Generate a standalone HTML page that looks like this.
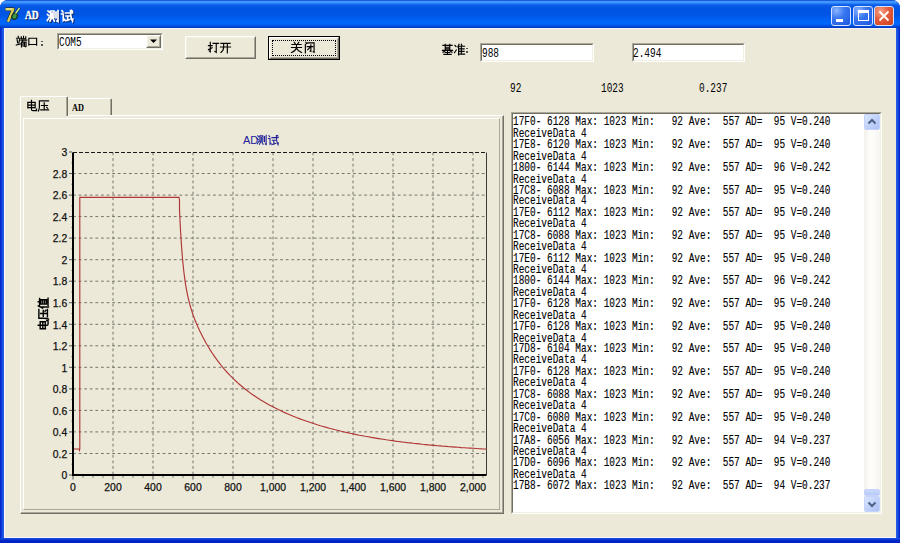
<!DOCTYPE html><html><head><meta charset="utf-8"><style>
*{margin:0;padding:0;box-sizing:border-box}
html,body{width:900px;height:543px;overflow:hidden;background:#fff}
body{position:relative;font-family:"Liberation Sans",sans-serif}
div,span,svg{position:absolute}
.g{overflow:visible}
.mono{font-family:"Liberation Mono",monospace}
.memo{-webkit-text-stroke:0.12px #000}
</style></head><body><div style="left:0;top:0;width:900px;height:543px;background:#0831D9;border-radius:8px 8px 0 0"></div><div style="left:0;top:28px;width:4px;height:515px;background:linear-gradient(to right,#001CC8,#1650E0 60%,#2A5FE8)"></div><div style="left:896px;top:28px;width:4px;height:515px;background:linear-gradient(to left,#001CC8,#1650E0 60%,#2A5FE8)"></div><div style="left:0;top:538px;width:900px;height:5px;background:linear-gradient(to bottom,#1A50E0,#0028C8 50%,#001CC0)"></div><div style="left:0;top:0;width:900px;height:28px;border-radius:8px 8px 0 0;background:linear-gradient(to bottom,#0A3FC8 0px,#3D95FF 1.5px,#3D95FF 2.5px,#0A5CE8 5px,#0054E3 9px,#0055E5 15px,#0062F6 20px,#0066FA 24px,#0050E0 26px,#0035C0 28px)"></div><div style="left:4px;top:28px;width:892px;height:510px;background:#ECE9D8;border-left:1px solid #F8F8F8;border-top:1px solid #F4F4F4;border-bottom:1px solid #F8F8F8"></div><svg style="left:0;top:0;width:24px;height:28px" viewBox="0 0 24 28"><path d="M5.5,9.2 L13.2,9.2 L8,21.8" fill="none" stroke="#2A2A10" stroke-width="3.8" stroke-linejoin="round" opacity="0.85"/><path d="M5.5,9.2 L13.2,9.2 L8,21.8" fill="none" stroke="#D8CC58" stroke-width="2.4" stroke-linejoin="round"/><path d="M6,9 L12,9" stroke="#F4F0B0" stroke-width="0.9"/><ellipse cx="14.6" cy="16.2" rx="2.6" ry="3.2" transform="rotate(30 14.6 16.2)" fill="#3C9A44" stroke="#14301A" stroke-width="1.2"/><path d="M15.5,13.5 L19.5,8" stroke="#102810" stroke-width="2.6"/><path d="M15.5,13.5 L19.5,8" stroke="#CDEFA0" stroke-width="1.4"/></svg><div style="left:25.5px;top:10px;font:bold 11.5px 'Liberation Serif',serif;line-height:12px;color:#0A246A;-webkit-text-stroke:0.4px #0A246A;transform:scaleX(0.82);transform-origin:0 0">AD</div><div style="left:24.5px;top:9px;font:bold 11.5px 'Liberation Serif',serif;line-height:12px;color:#fff;-webkit-text-stroke:0.4px #fff;transform:scaleX(0.82);transform-origin:0 0">AD</div><svg class="g" style="left:48.0px;top:11px;width:12px;height:12px;" viewBox="0 0 12 12"><path d="M1,1l1,1M0.5,4.5l1,1M0.3,10.5l2,-3M3.5,1v6.5M3.5,1h3.5v6.5M5.2,3v3.5M4.5,8l-1.5,3M5.8,8l1.5,3M9,2v6M11,0.5v11l-1,-0.6" fill="none" stroke="#0A246A" stroke-width="1.700" stroke-linecap="square"/></svg><svg class="g" style="left:47.0px;top:10px;width:12px;height:12px;" viewBox="0 0 12 12"><path d="M1,1l1,1M0.5,4.5l1,1M0.3,10.5l2,-3M3.5,1v6.5M3.5,1h3.5v6.5M5.2,3v3.5M4.5,8l-1.5,3M5.8,8l1.5,3M9,2v6M11,0.5v11l-1,-0.6" fill="none" stroke="#fff" stroke-width="1.700" stroke-linecap="square"/></svg><svg class="g" style="left:61.5px;top:11px;width:12px;height:12px;" viewBox="0 0 12 12"><path d="M1,0.8l1,1.2M0.5,4h1.8v6.5l1.2,-1M4.5,3h7M9.5,0.5q0,7 2,10.5l0.3,-2M10.6,0.5l0.8,0.8M5,6h3.5M6.7,6v4.5M4.5,10.8l4.3,-1.3" fill="none" stroke="#0A246A" stroke-width="1.700" stroke-linecap="square"/></svg><svg class="g" style="left:60.5px;top:10px;width:12px;height:12px;" viewBox="0 0 12 12"><path d="M1,0.8l1,1.2M0.5,4h1.8v6.5l1.2,-1M4.5,3h7M9.5,0.5q0,7 2,10.5l0.3,-2M10.6,0.5l0.8,0.8M5,6h3.5M6.7,6v4.5M4.5,10.8l4.3,-1.3" fill="none" stroke="#fff" stroke-width="1.700" stroke-linecap="square"/></svg><div style="left:831px;top:6px;width:20px;height:20px;border:1px solid #D8E4FC;border-radius:3px;background:radial-gradient(circle at 25% 20%,#8CB4FF 0%,#3A78F0 40%,#1C55E0 100%)"></div><div style="left:853px;top:6px;width:20px;height:20px;border:1px solid #D8E4FC;border-radius:3px;background:radial-gradient(circle at 25% 20%,#8CB4FF 0%,#3A78F0 40%,#1C55E0 100%)"></div><div style="left:874px;top:6px;width:20px;height:20px;border:1px solid #D8E4FC;border-radius:3px;background:radial-gradient(circle at 30% 25%,#F5A58A 0%,#E35B3A 45%,#C8401E 100%)"></div><div style="left:836px;top:18.5px;width:7px;height:3px;background:#fff"></div><div style="left:857.5px;top:10px;width:11px;height:11px;border:1px solid #fff;border-top-width:3px"></div><svg style="left:874px;top:6px;width:20px;height:20px" viewBox="0 0 20 20"><path d="M5.5,5.5L14.5,14.5M14.5,5.5L5.5,14.5" stroke="#fff" stroke-width="1.8"/></svg><svg class="g" style="left:16px;top:35.5px;width:11px;height:11px;" viewBox="0 0 12 12"><path d="M2.5,0.3v1.7M0.5,2.5h4M1.2,4l0.6,3.5M3.8,4l-0.6,3.5M0.3,10l4.5,-1.2M8.2,0.3v2.7M5.8,1v2h4.8v-2M5.2,4.5h6.5M7.5,4.5l-0.6,1.8M6,6.5v5.3M6,6.5h5v4.8l-0.7,0.5M7.7,6.5v4.5M9.3,6.5v4.5" fill="none" stroke="#000" stroke-width="1.255" stroke-linecap="square"/></svg><svg class="g" style="left:27px;top:35.5px;width:11px;height:11px;" viewBox="0 0 12 12"><path d="M2,2.5v7.5M2,2.5h8.5v7.5M2,9.3h8.5" fill="none" stroke="#000" stroke-width="1.255" stroke-linecap="square"/></svg><div style="left:41px;top:40.5px;width:1.6px;height:1.6px;background:#555"></div><div style="left:41px;top:44px;width:1.6px;height:1.6px;background:#555"></div><div style="left:57px;top:33px;width:106px;height:17px;background:#fff;border-top:1px solid #ACA899;border-left:1px solid #ACA899;border-right:1px solid #fff;border-bottom:1px solid #fff"><div style="left:0;top:0;right:0;bottom:0;border-top:1px solid #716F64;border-left:1px solid #716F64;border-right:1px solid #F1EFE2;border-bottom:1px solid #F1EFE2"></div></div><div style="left:146px;top:35px;width:15px;height:13px;background:#ECE9D8;border-top:1px solid #FFFFFF;border-left:1px solid #FFFFFF;border-right:1px solid #716F64;border-bottom:1px solid #716F64"><div style="left:0;top:0;right:0;bottom:0;border-top:1px solid #F1EFE2;border-left:1px solid #F1EFE2;border-right:1px solid #ACA899;border-bottom:1px solid #ACA899"></div></div><svg style="left:149px;top:38px;width:9px;height:6px" viewBox="0 0 9 6"><path d="M1,1.5h7l-3.5,3.5z" fill="#000"/></svg><div class="mono" style="left:59px;top:38px;font-size:12.5px;line-height:11px;color:#000;transform:scaleX(0.7556);transform-origin:0 0">COM5</div><div style="left:185px;top:36px;width:71px;height:23px;background:#ECE9D8;border-top:1px solid #FFFFFF;border-left:1px solid #FFFFFF;border-right:1px solid #716F64;border-bottom:1px solid #716F64"><div style="left:0;top:0;right:0;bottom:0;border-top:1px solid #F1EFE2;border-left:1px solid #F1EFE2;border-right:1px solid #ACA899;border-bottom:1px solid #ACA899"></div></div><svg class="g" style="left:208px;top:42px;width:11px;height:11px;" viewBox="0 0 12 12"><path d="M0.5,4h4M2.5,0.3v10.5l-1,-0.8M0.5,8.3l4,-2M5.5,1.5h6M9,1.5v9.8l-1.5,-1" fill="none" stroke="#000" stroke-width="1.255" stroke-linecap="square"/></svg><svg class="g" style="left:220px;top:42px;width:11px;height:11px;" viewBox="0 0 12 12"><path d="M1,1.5h10M0.5,5.5h11M4,1.5v4q0,4 -3,6M8,1.5v10.3" fill="none" stroke="#000" stroke-width="1.255" stroke-linecap="square"/></svg><div style="left:268px;top:36px;width:72px;height:24px;border:1px solid #000"></div><div style="left:269px;top:37px;width:70px;height:22px;background:#ECE9D8;border-top:1px solid #FFFFFF;border-left:1px solid #FFFFFF;border-right:1px solid #716F64;border-bottom:1px solid #716F64"><div style="left:0;top:0;right:0;bottom:0;border-top:1px solid #F1EFE2;border-left:1px solid #F1EFE2;border-right:1px solid #ACA899;border-bottom:1px solid #ACA899"></div></div><div style="left:272px;top:40px;width:64px;height:16px;border:1px dotted #000"></div><svg class="g" style="left:291px;top:42px;width:11px;height:11px;" viewBox="0 0 12 12"><path d="M3.5,0.3l1,1.5M8.5,0.3l-1,1.5M1,2.7h10M0.5,6h11M6,2.7v3.3q-1,4 -5.5,5.5M6,6.5q1.5,3.5 5.5,5" fill="none" stroke="#000" stroke-width="1.255" stroke-linecap="square"/></svg><svg class="g" style="left:304px;top:42px;width:11px;height:11px;" viewBox="0 0 12 12"><path d="M2,0.3l1,1.5M1.5,2.5v9.3M4,1h7v10.3l-1,-0.6M3.5,5h6M7.5,3v7.3l-0.8,-0.5M7,5.5l-3,3" fill="none" stroke="#000" stroke-width="1.255" stroke-linecap="square"/></svg><svg class="g" style="left:442px;top:43.5px;width:11px;height:11px;" viewBox="0 0 12 12"><path d="M1,1.5h10M3.5,0.3v7M8.5,0.3v7M3.5,3.5h5M3.5,5.3h5M0.5,7h11M4,7l-3,2M8,7l3,2M6,8v3M3.5,9.3h5M2,11.3h8" fill="none" stroke="#000" stroke-width="1.255" stroke-linecap="square"/></svg><svg class="g" style="left:454px;top:43.5px;width:11px;height:11px;" viewBox="0 0 12 12"><path d="M1,1.5l1.2,1.2M0.5,9.5l2,-3M5.5,0.3l-1.3,3M5,2.3v9.5M8,0.3l0.8,1.5M5,2.5h6.5M8,2.5v8.5M5,5.3h6M5,8h6M5,11h6.5" fill="none" stroke="#000" stroke-width="1.255" stroke-linecap="square"/></svg><div style="left:466px;top:47.5px;width:1.6px;height:1.6px;background:#555"></div><div style="left:466px;top:51px;width:1.6px;height:1.6px;background:#555"></div><div style="left:480px;top:43px;width:114px;height:19px;background:#fff;border-top:1px solid #ACA899;border-left:1px solid #ACA899;border-right:1px solid #fff;border-bottom:1px solid #fff"><div style="left:0;top:0;right:0;bottom:0;border-top:1px solid #716F64;border-left:1px solid #716F64;border-right:1px solid #F1EFE2;border-bottom:1px solid #F1EFE2"></div></div><div class="mono" style="left:482px;top:49px;font-size:12.5px;line-height:11px;color:#000;transform:scaleX(0.7556);transform-origin:0 0">988</div><div style="left:632px;top:43px;width:113px;height:19px;background:#fff;border-top:1px solid #ACA899;border-left:1px solid #ACA899;border-right:1px solid #fff;border-bottom:1px solid #fff"><div style="left:0;top:0;right:0;bottom:0;border-top:1px solid #716F64;border-left:1px solid #716F64;border-right:1px solid #F1EFE2;border-bottom:1px solid #F1EFE2"></div></div><div class="mono" style="left:633px;top:49px;font-size:12.5px;line-height:11px;color:#000;transform:scaleX(0.7556);transform-origin:0 0">2.494</div><div class="mono" style="left:510px;top:84px;font-size:12.5px;line-height:11px;color:#000;transform:scaleX(0.7556);transform-origin:0 0">92</div><div class="mono" style="left:601px;top:84px;font-size:12.5px;line-height:11px;color:#000;transform:scaleX(0.7556);transform-origin:0 0">1023</div><div class="mono" style="left:699px;top:84px;font-size:12.5px;line-height:11px;color:#000;transform:scaleX(0.7556);transform-origin:0 0">0.237</div><div style="left:20px;top:115px;width:484px;height:399px;border-top:1px solid #fff;border-left:1px solid #fff;border-right:1px solid #716F64;border-bottom:1px solid #716F64"><div style="left:0;top:0;right:0;bottom:0;border-right:1px solid #ACA899;border-bottom:1px solid #ACA899"></div></div><div style="left:67px;top:98px;width:45px;height:17px;border-top:1px solid #fff;border-right:1px solid #716F64;border-radius:0 2px 0 0"><div style="left:0;top:0;right:0;bottom:0;border-right:1px solid #ACA899"></div></div><div style="left:72px;top:101px;font:bold 11px 'Liberation Serif',serif;color:#000;transform:scaleX(0.75);transform-origin:0 0">AD</div><div style="left:20px;top:96px;width:48px;height:20px;background:#ECE9D8;border-top:1px solid #fff;border-left:1px solid #fff;border-right:1px solid #716F64;border-radius:2px 2px 0 0"><div style="left:0;top:0;right:0;bottom:0;border-right:1px solid #ACA899"></div></div><svg class="g" style="left:26px;top:99.5px;width:11px;height:11px;" viewBox="0 0 12 12"><path d="M2,2.5v6M2,2.5h8v6M2,5.5h8M2,8.3h8M6,0.3v10q0,1.2 1.5,1.2h4v-1.5" fill="none" stroke="#000" stroke-width="1.309" stroke-linecap="square"/></svg><svg class="g" style="left:37.5px;top:99.5px;width:11px;height:11px;" viewBox="0 0 12 12"><path d="M1.5,1h10M1.5,1v6q0,3 -1,5M6.8,3v7.5M3.8,6h6.5M3,10.8h8.5M9.5,8l1,1" fill="none" stroke="#000" stroke-width="1.309" stroke-linecap="square"/></svg><div style="left:23px;top:118px;width:477px;height:392px;border-top:1px solid #fff;border-left:1px solid #fff;border-right:1px solid #ACA899;border-bottom:1px solid #ACA899"></div><div style="left:511px;top:112px;width:371px;height:402px;background:#fff;border-top:1px solid #ACA899;border-left:1px solid #ACA899;border-right:1px solid #fff;border-bottom:1px solid #fff"><div style="left:0;top:0;right:0;bottom:0;border-top:1px solid #716F64;border-left:1px solid #716F64;border-right:1px solid #F1EFE2;border-bottom:1px solid #F1EFE2"></div></div><div style="left:864px;top:114px;width:16px;height:398px;background:linear-gradient(to right,#F3F1EC,#FEFEFB 40%,#F7F5F0)"></div><div style="left:864px;top:114px;width:16px;height:16px;border:1px solid #C3D3FD;border-radius:2px;background:linear-gradient(135deg,#DCE7FE,#BCCEF8 60%,#AFC2F2)"></div><svg style="left:864px;top:114px;width:16px;height:16px" viewBox="0 0 16 16"><path d="M4.5,9.5L8,6L11.5,9.5" fill="none" stroke="#4D6185" stroke-width="2"/></svg><div style="left:864px;top:496px;width:16px;height:16px;border:1px solid #C3D3FD;border-radius:2px;background:linear-gradient(135deg,#DCE7FE,#BCCEF8 60%,#AFC2F2)"></div><svg style="left:864px;top:496px;width:16px;height:16px" viewBox="0 0 16 16"><path d="M4.5,6.5L8,10L11.5,6.5" fill="none" stroke="#4D6185" stroke-width="2"/></svg><div style="left:864px;top:489px;width:16px;height:7px;border:1px solid #C3D3FD;border-radius:2px;background:linear-gradient(to bottom,#CBDAFC,#B8CBF5)"></div><div class="mono memo" style="left:513.3px;top:116.8px;width:420px;font-size:11.5px;line-height:10.919px;color:#000;white-space:nowrap;transform:scale(0.8213,1.04);transform-origin:0 0">17F0-&nbsp;6128&nbsp;Max:&nbsp;1023&nbsp;Min:&nbsp;&nbsp;&nbsp;92&nbsp;Ave:&nbsp;&nbsp;557&nbsp;AD=&nbsp;&nbsp;95&nbsp;V=0.240<br>ReceiveData&nbsp;4<br>17E8-&nbsp;6120&nbsp;Max:&nbsp;1023&nbsp;Min:&nbsp;&nbsp;&nbsp;92&nbsp;Ave:&nbsp;&nbsp;557&nbsp;AD=&nbsp;&nbsp;95&nbsp;V=0.240<br>ReceiveData&nbsp;4<br>1800-&nbsp;6144&nbsp;Max:&nbsp;1023&nbsp;Min:&nbsp;&nbsp;&nbsp;92&nbsp;Ave:&nbsp;&nbsp;557&nbsp;AD=&nbsp;&nbsp;96&nbsp;V=0.242<br>ReceiveData&nbsp;4<br>17C8-&nbsp;6088&nbsp;Max:&nbsp;1023&nbsp;Min:&nbsp;&nbsp;&nbsp;92&nbsp;Ave:&nbsp;&nbsp;557&nbsp;AD=&nbsp;&nbsp;95&nbsp;V=0.240<br>ReceiveData&nbsp;4<br>17E0-&nbsp;6112&nbsp;Max:&nbsp;1023&nbsp;Min:&nbsp;&nbsp;&nbsp;92&nbsp;Ave:&nbsp;&nbsp;557&nbsp;AD=&nbsp;&nbsp;95&nbsp;V=0.240<br>ReceiveData&nbsp;4<br>17C8-&nbsp;6088&nbsp;Max:&nbsp;1023&nbsp;Min:&nbsp;&nbsp;&nbsp;92&nbsp;Ave:&nbsp;&nbsp;557&nbsp;AD=&nbsp;&nbsp;95&nbsp;V=0.240<br>ReceiveData&nbsp;4<br>17E0-&nbsp;6112&nbsp;Max:&nbsp;1023&nbsp;Min:&nbsp;&nbsp;&nbsp;92&nbsp;Ave:&nbsp;&nbsp;557&nbsp;AD=&nbsp;&nbsp;95&nbsp;V=0.240<br>ReceiveData&nbsp;4<br>1800-&nbsp;6144&nbsp;Max:&nbsp;1023&nbsp;Min:&nbsp;&nbsp;&nbsp;92&nbsp;Ave:&nbsp;&nbsp;557&nbsp;AD=&nbsp;&nbsp;96&nbsp;V=0.242<br>ReceiveData&nbsp;4<br>17F0-&nbsp;6128&nbsp;Max:&nbsp;1023&nbsp;Min:&nbsp;&nbsp;&nbsp;92&nbsp;Ave:&nbsp;&nbsp;557&nbsp;AD=&nbsp;&nbsp;95&nbsp;V=0.240<br>ReceiveData&nbsp;4<br>17F0-&nbsp;6128&nbsp;Max:&nbsp;1023&nbsp;Min:&nbsp;&nbsp;&nbsp;92&nbsp;Ave:&nbsp;&nbsp;557&nbsp;AD=&nbsp;&nbsp;95&nbsp;V=0.240<br>ReceiveData&nbsp;4<br>17D8-&nbsp;6104&nbsp;Max:&nbsp;1023&nbsp;Min:&nbsp;&nbsp;&nbsp;92&nbsp;Ave:&nbsp;&nbsp;557&nbsp;AD=&nbsp;&nbsp;95&nbsp;V=0.240<br>ReceiveData&nbsp;4<br>17F0-&nbsp;6128&nbsp;Max:&nbsp;1023&nbsp;Min:&nbsp;&nbsp;&nbsp;92&nbsp;Ave:&nbsp;&nbsp;557&nbsp;AD=&nbsp;&nbsp;95&nbsp;V=0.240<br>ReceiveData&nbsp;4<br>17C8-&nbsp;6088&nbsp;Max:&nbsp;1023&nbsp;Min:&nbsp;&nbsp;&nbsp;92&nbsp;Ave:&nbsp;&nbsp;557&nbsp;AD=&nbsp;&nbsp;95&nbsp;V=0.240<br>ReceiveData&nbsp;4<br>17C0-&nbsp;6080&nbsp;Max:&nbsp;1023&nbsp;Min:&nbsp;&nbsp;&nbsp;92&nbsp;Ave:&nbsp;&nbsp;557&nbsp;AD=&nbsp;&nbsp;95&nbsp;V=0.240<br>ReceiveData&nbsp;4<br>17A8-&nbsp;6056&nbsp;Max:&nbsp;1023&nbsp;Min:&nbsp;&nbsp;&nbsp;92&nbsp;Ave:&nbsp;&nbsp;557&nbsp;AD=&nbsp;&nbsp;94&nbsp;V=0.237<br>ReceiveData&nbsp;4<br>17D0-&nbsp;6096&nbsp;Max:&nbsp;1023&nbsp;Min:&nbsp;&nbsp;&nbsp;92&nbsp;Ave:&nbsp;&nbsp;557&nbsp;AD=&nbsp;&nbsp;95&nbsp;V=0.240<br>ReceiveData&nbsp;4<br>17B8-&nbsp;6072&nbsp;Max:&nbsp;1023&nbsp;Min:&nbsp;&nbsp;&nbsp;92&nbsp;Ave:&nbsp;&nbsp;557&nbsp;AD=&nbsp;&nbsp;94&nbsp;V=0.237</div><svg style="left:0;top:0;width:900px;height:543px" viewBox="0 0 900 543"><line x1="73.0" y1="453.5" x2="486.5" y2="453.5" stroke="#76746B" stroke-width="1" stroke-dasharray="2.8,2.8"/><line x1="73.0" y1="431.9" x2="486.5" y2="431.9" stroke="#76746B" stroke-width="1" stroke-dasharray="2.8,2.8"/><line x1="73.0" y1="410.4" x2="486.5" y2="410.4" stroke="#76746B" stroke-width="1" stroke-dasharray="2.8,2.8"/><line x1="73.0" y1="388.9" x2="486.5" y2="388.9" stroke="#76746B" stroke-width="1" stroke-dasharray="2.8,2.8"/><line x1="73.0" y1="367.3" x2="486.5" y2="367.3" stroke="#76746B" stroke-width="1" stroke-dasharray="2.8,2.8"/><line x1="73.0" y1="345.8" x2="486.5" y2="345.8" stroke="#76746B" stroke-width="1" stroke-dasharray="2.8,2.8"/><line x1="73.0" y1="324.3" x2="486.5" y2="324.3" stroke="#76746B" stroke-width="1" stroke-dasharray="2.8,2.8"/><line x1="73.0" y1="302.7" x2="486.5" y2="302.7" stroke="#76746B" stroke-width="1" stroke-dasharray="2.8,2.8"/><line x1="73.0" y1="281.2" x2="486.5" y2="281.2" stroke="#76746B" stroke-width="1" stroke-dasharray="2.8,2.8"/><line x1="73.0" y1="259.7" x2="486.5" y2="259.7" stroke="#76746B" stroke-width="1" stroke-dasharray="2.8,2.8"/><line x1="73.0" y1="238.1" x2="486.5" y2="238.1" stroke="#76746B" stroke-width="1" stroke-dasharray="2.8,2.8"/><line x1="73.0" y1="216.6" x2="486.5" y2="216.6" stroke="#76746B" stroke-width="1" stroke-dasharray="2.8,2.8"/><line x1="73.0" y1="195.1" x2="486.5" y2="195.1" stroke="#76746B" stroke-width="1" stroke-dasharray="2.8,2.8"/><line x1="73.0" y1="173.5" x2="486.5" y2="173.5" stroke="#76746B" stroke-width="1" stroke-dasharray="2.8,2.8"/><line x1="113.0" y1="152.5" x2="113.0" y2="475.0" stroke="#76746B" stroke-width="1" stroke-dasharray="2.8,2.8"/><line x1="153.0" y1="152.5" x2="153.0" y2="475.0" stroke="#76746B" stroke-width="1" stroke-dasharray="2.8,2.8"/><line x1="193.0" y1="152.5" x2="193.0" y2="475.0" stroke="#76746B" stroke-width="1" stroke-dasharray="2.8,2.8"/><line x1="233.0" y1="152.5" x2="233.0" y2="475.0" stroke="#76746B" stroke-width="1" stroke-dasharray="2.8,2.8"/><line x1="273.0" y1="152.5" x2="273.0" y2="475.0" stroke="#76746B" stroke-width="1" stroke-dasharray="2.8,2.8"/><line x1="313.0" y1="152.5" x2="313.0" y2="475.0" stroke="#76746B" stroke-width="1" stroke-dasharray="2.8,2.8"/><line x1="353.0" y1="152.5" x2="353.0" y2="475.0" stroke="#76746B" stroke-width="1" stroke-dasharray="2.8,2.8"/><line x1="393.0" y1="152.5" x2="393.0" y2="475.0" stroke="#76746B" stroke-width="1" stroke-dasharray="2.8,2.8"/><line x1="433.0" y1="152.5" x2="433.0" y2="475.0" stroke="#76746B" stroke-width="1" stroke-dasharray="2.8,2.8"/><line x1="473.0" y1="152.5" x2="473.0" y2="475.0" stroke="#76746B" stroke-width="1" stroke-dasharray="2.8,2.8"/><line x1="73.0" y1="152.5" x2="486.5" y2="152.5" stroke="#1A1A1A" stroke-width="1.2" stroke-dasharray="4,2"/><line x1="486.5" y1="152.5" x2="486.5" y2="475.0" stroke="#3A3A3A" stroke-width="1"/><line x1="69" y1="475.0" x2="72" y2="475.0" stroke="#555" stroke-width="1"/><line x1="69" y1="453.5" x2="72" y2="453.5" stroke="#555" stroke-width="1"/><line x1="69" y1="431.9" x2="72" y2="431.9" stroke="#555" stroke-width="1"/><line x1="69" y1="410.4" x2="72" y2="410.4" stroke="#555" stroke-width="1"/><line x1="69" y1="388.9" x2="72" y2="388.9" stroke="#555" stroke-width="1"/><line x1="69" y1="367.3" x2="72" y2="367.3" stroke="#555" stroke-width="1"/><line x1="69" y1="345.8" x2="72" y2="345.8" stroke="#555" stroke-width="1"/><line x1="69" y1="324.3" x2="72" y2="324.3" stroke="#555" stroke-width="1"/><line x1="69" y1="302.7" x2="72" y2="302.7" stroke="#555" stroke-width="1"/><line x1="69" y1="281.2" x2="72" y2="281.2" stroke="#555" stroke-width="1"/><line x1="69" y1="259.7" x2="72" y2="259.7" stroke="#555" stroke-width="1"/><line x1="69" y1="238.1" x2="72" y2="238.1" stroke="#555" stroke-width="1"/><line x1="69" y1="216.6" x2="72" y2="216.6" stroke="#555" stroke-width="1"/><line x1="69" y1="195.1" x2="72" y2="195.1" stroke="#555" stroke-width="1"/><line x1="69" y1="173.5" x2="72" y2="173.5" stroke="#555" stroke-width="1"/><line x1="69" y1="152.0" x2="72" y2="152.0" stroke="#555" stroke-width="1"/><line x1="71" y1="464.2" x2="72" y2="464.2" stroke="#A8A698" stroke-width="1"/><line x1="71" y1="442.7" x2="72" y2="442.7" stroke="#A8A698" stroke-width="1"/><line x1="71" y1="421.2" x2="72" y2="421.2" stroke="#A8A698" stroke-width="1"/><line x1="71" y1="399.6" x2="72" y2="399.6" stroke="#A8A698" stroke-width="1"/><line x1="71" y1="378.1" x2="72" y2="378.1" stroke="#A8A698" stroke-width="1"/><line x1="71" y1="356.6" x2="72" y2="356.6" stroke="#A8A698" stroke-width="1"/><line x1="71" y1="335.0" x2="72" y2="335.0" stroke="#A8A698" stroke-width="1"/><line x1="71" y1="313.5" x2="72" y2="313.5" stroke="#A8A698" stroke-width="1"/><line x1="71" y1="292.0" x2="72" y2="292.0" stroke="#A8A698" stroke-width="1"/><line x1="71" y1="270.4" x2="72" y2="270.4" stroke="#A8A698" stroke-width="1"/><line x1="71" y1="248.9" x2="72" y2="248.9" stroke="#A8A698" stroke-width="1"/><line x1="71" y1="227.4" x2="72" y2="227.4" stroke="#A8A698" stroke-width="1"/><line x1="71" y1="205.8" x2="72" y2="205.8" stroke="#A8A698" stroke-width="1"/><line x1="71" y1="184.3" x2="72" y2="184.3" stroke="#A8A698" stroke-width="1"/><line x1="71" y1="162.8" x2="72" y2="162.8" stroke="#A8A698" stroke-width="1"/><line x1="73.0" y1="476" x2="73.0" y2="479.5" stroke="#555" stroke-width="1"/><line x1="113.0" y1="476" x2="113.0" y2="479.5" stroke="#555" stroke-width="1"/><line x1="153.0" y1="476" x2="153.0" y2="479.5" stroke="#555" stroke-width="1"/><line x1="193.0" y1="476" x2="193.0" y2="479.5" stroke="#555" stroke-width="1"/><line x1="233.0" y1="476" x2="233.0" y2="479.5" stroke="#555" stroke-width="1"/><line x1="273.0" y1="476" x2="273.0" y2="479.5" stroke="#555" stroke-width="1"/><line x1="313.0" y1="476" x2="313.0" y2="479.5" stroke="#555" stroke-width="1"/><line x1="353.0" y1="476" x2="353.0" y2="479.5" stroke="#555" stroke-width="1"/><line x1="393.0" y1="476" x2="393.0" y2="479.5" stroke="#555" stroke-width="1"/><line x1="433.0" y1="476" x2="433.0" y2="479.5" stroke="#555" stroke-width="1"/><line x1="473.0" y1="476" x2="473.0" y2="479.5" stroke="#555" stroke-width="1"/><line x1="83.0" y1="476" x2="83.0" y2="478" stroke="#888" stroke-width="1"/><line x1="93.0" y1="476" x2="93.0" y2="478" stroke="#888" stroke-width="1"/><line x1="103.0" y1="476" x2="103.0" y2="478" stroke="#888" stroke-width="1"/><line x1="123.0" y1="476" x2="123.0" y2="478" stroke="#888" stroke-width="1"/><line x1="133.0" y1="476" x2="133.0" y2="478" stroke="#888" stroke-width="1"/><line x1="143.0" y1="476" x2="143.0" y2="478" stroke="#888" stroke-width="1"/><line x1="163.0" y1="476" x2="163.0" y2="478" stroke="#888" stroke-width="1"/><line x1="173.0" y1="476" x2="173.0" y2="478" stroke="#888" stroke-width="1"/><line x1="183.0" y1="476" x2="183.0" y2="478" stroke="#888" stroke-width="1"/><line x1="203.0" y1="476" x2="203.0" y2="478" stroke="#888" stroke-width="1"/><line x1="213.0" y1="476" x2="213.0" y2="478" stroke="#888" stroke-width="1"/><line x1="223.0" y1="476" x2="223.0" y2="478" stroke="#888" stroke-width="1"/><line x1="243.0" y1="476" x2="243.0" y2="478" stroke="#888" stroke-width="1"/><line x1="253.0" y1="476" x2="253.0" y2="478" stroke="#888" stroke-width="1"/><line x1="263.0" y1="476" x2="263.0" y2="478" stroke="#888" stroke-width="1"/><line x1="283.0" y1="476" x2="283.0" y2="478" stroke="#888" stroke-width="1"/><line x1="293.0" y1="476" x2="293.0" y2="478" stroke="#888" stroke-width="1"/><line x1="303.0" y1="476" x2="303.0" y2="478" stroke="#888" stroke-width="1"/><line x1="323.0" y1="476" x2="323.0" y2="478" stroke="#888" stroke-width="1"/><line x1="333.0" y1="476" x2="333.0" y2="478" stroke="#888" stroke-width="1"/><line x1="343.0" y1="476" x2="343.0" y2="478" stroke="#888" stroke-width="1"/><line x1="363.0" y1="476" x2="363.0" y2="478" stroke="#888" stroke-width="1"/><line x1="373.0" y1="476" x2="373.0" y2="478" stroke="#888" stroke-width="1"/><line x1="383.0" y1="476" x2="383.0" y2="478" stroke="#888" stroke-width="1"/><line x1="403.0" y1="476" x2="403.0" y2="478" stroke="#888" stroke-width="1"/><line x1="413.0" y1="476" x2="413.0" y2="478" stroke="#888" stroke-width="1"/><line x1="423.0" y1="476" x2="423.0" y2="478" stroke="#888" stroke-width="1"/><line x1="443.0" y1="476" x2="443.0" y2="478" stroke="#888" stroke-width="1"/><line x1="453.0" y1="476" x2="453.0" y2="478" stroke="#888" stroke-width="1"/><line x1="463.0" y1="476" x2="463.0" y2="478" stroke="#888" stroke-width="1"/><line x1="483.0" y1="476" x2="483.0" y2="478" stroke="#888" stroke-width="1"/><line x1="73" y1="152.5" x2="73" y2="476" stroke="#000" stroke-width="2"/><line x1="72" y1="475" x2="486.5" y2="475" stroke="#000" stroke-width="2"/><path d="M74.0,449.0 L79.0,449.0 L79.5,450.3 L79.8,449.0 L79.8,197.3 L179.0,197.3 L179.5,200.0 L179.5,209.6 L179.9,218.3 L180.3,226.2 L180.7,233.3 L181.1,239.8 L181.5,245.7 L181.9,251.1 L182.3,256.0 L182.7,260.5 L183.1,264.7 L183.5,268.5 L183.9,272.0 L184.3,275.3 L184.7,278.4 L185.1,281.2 L185.5,283.8 L185.9,286.3 L186.3,288.6 L186.7,290.8 L187.1,292.8 L187.5,294.8 L187.9,296.6 L188.3,298.4 L188.7,300.1 L189.1,301.7 L189.5,303.2 L189.9,304.7 L190.3,306.1 L190.7,307.5 L191.1,308.8 L191.5,310.1 L191.9,311.3 L192.3,312.5 L192.7,313.7 L193.1,314.9 L193.5,316.0 L193.9,317.1 L194.3,318.1 L194.7,319.2 L195.1,320.2 L195.5,321.2 L195.9,322.2 L196.3,323.2 L196.7,324.1 L197.1,325.0 L197.5,326.0 L197.9,326.9 L198.3,327.8 L198.7,328.6 L199.1,329.5 L199.5,330.4 L199.9,331.2 L200.3,332.1 L201.8,335.1 L203.3,338.0 L204.8,340.8 L206.3,343.5 L207.8,346.0 L209.3,348.5 L210.8,350.9 L212.3,353.2 L213.8,355.4 L215.3,357.6 L216.8,359.7 L218.3,361.7 L219.8,363.6 L221.3,365.5 L222.8,367.3 L224.3,369.1 L225.8,370.8 L227.3,372.5 L228.8,374.1 L230.3,375.7 L231.8,377.2 L233.3,378.7 L234.8,380.1 L236.3,381.5 L237.8,382.9 L239.3,384.2 L240.8,385.5 L242.3,386.7 L243.8,388.0 L245.3,389.2 L246.8,390.3 L248.3,391.5 L249.8,392.6 L251.3,393.7 L252.8,394.7 L254.3,395.7 L255.8,396.8 L257.3,397.7 L258.8,398.7 L260.3,399.7 L263.3,401.5 L266.3,403.2 L269.3,404.9 L272.3,406.5 L275.3,408.1 L278.3,409.6 L281.3,411.0 L284.3,412.4 L287.3,413.7 L290.3,415.0 L293.3,416.3 L296.3,417.5 L299.3,418.6 L302.3,419.7 L305.3,420.8 L308.3,421.8 L311.3,422.8 L314.3,423.8 L317.3,424.8 L320.3,425.7 L323.3,426.5 L326.3,427.4 L329.3,428.2 L332.3,429.0 L335.3,429.8 L338.3,430.5 L341.3,431.3 L344.3,432.0 L347.3,432.6 L350.3,433.3 L353.3,433.9 L356.3,434.6 L359.3,435.2 L362.3,435.7 L365.3,436.3 L368.3,436.8 L371.3,437.4 L374.3,437.9 L377.3,438.4 L380.3,438.9 L383.3,439.3 L386.3,439.8 L389.3,440.2 L392.3,440.6 L395.3,441.1 L398.3,441.5 L401.3,441.9 L404.3,442.2 L407.3,442.6 L410.3,442.9 L413.3,443.3 L416.3,443.6 L419.3,443.9 L422.3,444.3 L425.3,444.6 L428.3,444.9 L431.3,445.1 L434.3,445.4 L437.3,445.7 L440.3,445.9 L443.3,446.2 L446.3,446.4 L449.3,446.7 L452.3,446.9 L455.3,447.1 L458.3,447.3 L461.3,447.6 L464.3,447.8 L467.3,448.0 L470.3,448.1 L473.3,448.3 L476.3,448.5 L479.3,448.7 L482.3,448.9 L485.3,449.0 L486.5,449.1" fill="none" stroke="#B03535" stroke-width="1.15"/></svg><div style="left:27px;top:470.2px;width:40.3px;text-align:right;font-size:10.4px;line-height:12px;color:#111;-webkit-text-stroke:0.25px #111">0</div><div style="left:27px;top:448.7px;width:40.3px;text-align:right;font-size:10.4px;line-height:12px;color:#111;-webkit-text-stroke:0.25px #111">0.2</div><div style="left:27px;top:427.1px;width:40.3px;text-align:right;font-size:10.4px;line-height:12px;color:#111;-webkit-text-stroke:0.25px #111">0.4</div><div style="left:27px;top:405.6px;width:40.3px;text-align:right;font-size:10.4px;line-height:12px;color:#111;-webkit-text-stroke:0.25px #111">0.6</div><div style="left:27px;top:384.1px;width:40.3px;text-align:right;font-size:10.4px;line-height:12px;color:#111;-webkit-text-stroke:0.25px #111">0.8</div><div style="left:27px;top:362.5px;width:40.3px;text-align:right;font-size:10.4px;line-height:12px;color:#111;-webkit-text-stroke:0.25px #111">1</div><div style="left:27px;top:341.0px;width:40.3px;text-align:right;font-size:10.4px;line-height:12px;color:#111;-webkit-text-stroke:0.25px #111">1.2</div><div style="left:27px;top:319.5px;width:40.3px;text-align:right;font-size:10.4px;line-height:12px;color:#111;-webkit-text-stroke:0.25px #111">1.4</div><div style="left:27px;top:297.9px;width:40.3px;text-align:right;font-size:10.4px;line-height:12px;color:#111;-webkit-text-stroke:0.25px #111">1.6</div><div style="left:27px;top:276.4px;width:40.3px;text-align:right;font-size:10.4px;line-height:12px;color:#111;-webkit-text-stroke:0.25px #111">1.8</div><div style="left:27px;top:254.9px;width:40.3px;text-align:right;font-size:10.4px;line-height:12px;color:#111;-webkit-text-stroke:0.25px #111">2</div><div style="left:27px;top:233.3px;width:40.3px;text-align:right;font-size:10.4px;line-height:12px;color:#111;-webkit-text-stroke:0.25px #111">2.2</div><div style="left:27px;top:211.8px;width:40.3px;text-align:right;font-size:10.4px;line-height:12px;color:#111;-webkit-text-stroke:0.25px #111">2.4</div><div style="left:27px;top:190.3px;width:40.3px;text-align:right;font-size:10.4px;line-height:12px;color:#111;-webkit-text-stroke:0.25px #111">2.6</div><div style="left:27px;top:168.7px;width:40.3px;text-align:right;font-size:10.4px;line-height:12px;color:#111;-webkit-text-stroke:0.25px #111">2.8</div><div style="left:27px;top:147.2px;width:40.3px;text-align:right;font-size:10.4px;line-height:12px;color:#111;-webkit-text-stroke:0.25px #111">3</div><div style="left:53.0px;top:482px;width:40px;text-align:center;font-size:10.4px;line-height:12px;color:#111;-webkit-text-stroke:0.25px #111">0</div><div style="left:93.0px;top:482px;width:40px;text-align:center;font-size:10.4px;line-height:12px;color:#111;-webkit-text-stroke:0.25px #111">200</div><div style="left:133.0px;top:482px;width:40px;text-align:center;font-size:10.4px;line-height:12px;color:#111;-webkit-text-stroke:0.25px #111">400</div><div style="left:173.0px;top:482px;width:40px;text-align:center;font-size:10.4px;line-height:12px;color:#111;-webkit-text-stroke:0.25px #111">600</div><div style="left:213.0px;top:482px;width:40px;text-align:center;font-size:10.4px;line-height:12px;color:#111;-webkit-text-stroke:0.25px #111">800</div><div style="left:253.0px;top:482px;width:40px;text-align:center;font-size:10.4px;line-height:12px;color:#111;-webkit-text-stroke:0.25px #111">1,000</div><div style="left:293.0px;top:482px;width:40px;text-align:center;font-size:10.4px;line-height:12px;color:#111;-webkit-text-stroke:0.25px #111">1,200</div><div style="left:333.0px;top:482px;width:40px;text-align:center;font-size:10.4px;line-height:12px;color:#111;-webkit-text-stroke:0.25px #111">1,400</div><div style="left:373.0px;top:482px;width:40px;text-align:center;font-size:10.4px;line-height:12px;color:#111;-webkit-text-stroke:0.25px #111">1,600</div><div style="left:413.0px;top:482px;width:40px;text-align:center;font-size:10.4px;line-height:12px;color:#111;-webkit-text-stroke:0.25px #111">1,800</div><div style="left:453.0px;top:482px;width:40px;text-align:center;font-size:10.4px;line-height:12px;color:#111;-webkit-text-stroke:0.25px #111">2,000</div><div style="left:243px;top:134px;font:normal 11px 'Liberation Sans',sans-serif;line-height:12px;color:#22229A">AD</div><svg class="g" style="left:257px;top:135px;width:10px;height:10px;" viewBox="0 0 12 12"><path d="M1,1l1,1M0.5,4.5l1,1M0.3,10.5l2,-3M3.5,1v6.5M3.5,1h3.5v6.5M5.2,3v3.5M4.5,8l-1.5,3M5.8,8l1.5,3M9,2v6M11,0.5v11l-1,-0.6" fill="none" stroke="#22229A" stroke-width="1.320" stroke-linecap="square"/></svg><svg class="g" style="left:268px;top:135px;width:10.5px;height:10.5px;" viewBox="0 0 12 12"><path d="M1,0.8l1,1.2M0.5,4h1.8v6.5l1.2,-1M4.5,3h7M9.5,0.5q0,7 2,10.5l0.3,-2M10.6,0.5l0.8,0.8M5,6h3.5M6.7,6v4.5M4.5,10.8l4.3,-1.3" fill="none" stroke="#22229A" stroke-width="1.257" stroke-linecap="square"/></svg><svg class="g" style="left:38px;top:320px;width:10.5px;height:10.5px;transform:rotate(-90deg)" viewBox="0 0 12 12"><path d="M2,2.5v6M2,2.5h8v6M2,5.5h8M2,8.3h8M6,0.3v10q0,1.2 1.5,1.2h4v-1.5" fill="none" stroke="#000" stroke-width="1.600" stroke-linecap="square"/></svg><svg class="g" style="left:38px;top:309px;width:10.5px;height:10.5px;transform:rotate(-90deg)" viewBox="0 0 12 12"><path d="M1.5,1h10M1.5,1v6q0,3 -1,5M6.8,3v7.5M3.8,6h6.5M3,10.8h8.5M9.5,8l1,1" fill="none" stroke="#000" stroke-width="1.600" stroke-linecap="square"/></svg><svg class="g" style="left:38px;top:298px;width:10.5px;height:10.5px;transform:rotate(-90deg)" viewBox="0 0 12 12"><path d="M3,0.3l-2.5,5M1.8,3.5v8.5M4,1.8h7.5M7.7,0.3v1.5M5,3.3v6.5M5,3.3h5v6.5M5,5.5h5M5,7.7h5M5,9.8h5M3.8,11.5h8" fill="none" stroke="#000" stroke-width="1.600" stroke-linecap="square"/></svg></body></html>
